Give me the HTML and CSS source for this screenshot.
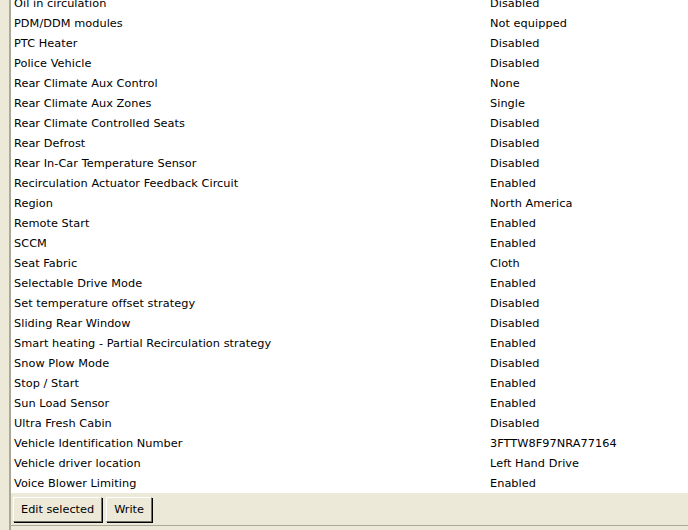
FILE: index.html
```html
<!DOCTYPE html>
<html>
<head><meta charset="utf-8"><link rel="stylesheet" href="styles.css"></head>
<body>
<div class="app">
  <div class="side"></div>
  <div class="main">
    <div class="list">
      <div class="rows">
        <div class="row"><span class="name">Oil in circulation</span><span class="val">Disabled</span></div>
        <div class="row"><span class="name">PDM/DDM modules</span><span class="val">Not equipped</span></div>
        <div class="row"><span class="name">PTC Heater</span><span class="val">Disabled</span></div>
        <div class="row"><span class="name">Police Vehicle</span><span class="val">Disabled</span></div>
        <div class="row"><span class="name">Rear Climate Aux Control</span><span class="val">None</span></div>
        <div class="row"><span class="name">Rear Climate Aux Zones</span><span class="val">Single</span></div>
        <div class="row"><span class="name">Rear Climate Controlled Seats</span><span class="val">Disabled</span></div>
        <div class="row"><span class="name">Rear Defrost</span><span class="val">Disabled</span></div>
        <div class="row"><span class="name">Rear In-Car Temperature Sensor</span><span class="val">Disabled</span></div>
        <div class="row"><span class="name">Recirculation Actuator Feedback Circuit</span><span class="val">Enabled</span></div>
        <div class="row"><span class="name">Region</span><span class="val">North America</span></div>
        <div class="row"><span class="name">Remote Start</span><span class="val">Enabled</span></div>
        <div class="row"><span class="name">SCCM</span><span class="val">Enabled</span></div>
        <div class="row"><span class="name">Seat Fabric</span><span class="val">Cloth</span></div>
        <div class="row"><span class="name">Selectable Drive Mode</span><span class="val">Enabled</span></div>
        <div class="row"><span class="name">Set temperature offset strategy</span><span class="val">Disabled</span></div>
        <div class="row"><span class="name">Sliding Rear Window</span><span class="val">Disabled</span></div>
        <div class="row"><span class="name">Smart heating - Partial Recirculation strategy</span><span class="val">Enabled</span></div>
        <div class="row"><span class="name">Snow Plow Mode</span><span class="val">Disabled</span></div>
        <div class="row"><span class="name">Stop / Start</span><span class="val">Enabled</span></div>
        <div class="row"><span class="name">Sun Load Sensor</span><span class="val">Enabled</span></div>
        <div class="row"><span class="name">Ultra Fresh Cabin</span><span class="val">Disabled</span></div>
        <div class="row"><span class="name">Vehicle Identification Number</span><span class="val">3FTTW8F97NRA77164</span></div>
        <div class="row"><span class="name">Vehicle driver location</span><span class="val">Left Hand Drive</span></div>
        <div class="row"><span class="name">Voice Blower Limiting</span><span class="val">Enabled</span></div>
      </div>
    </div>
    <div class="toolbar">
      <button class="btn">Edit selected</button>
      <button class="btn">Write</button>
    </div>
    <div class="status"></div>
  </div>
</div>
</body>
</html>
```
FILE: styles.css
```css
html, body {
  margin: 0;
  padding: 0;
  width: 688px;
  height: 530px;
  overflow: hidden;
  background: #ECE9D8;
  font-family: "DejaVu Sans", "Liberation Sans", sans-serif;
  font-size: 11.3px;
  letter-spacing: 0.05px;
  color: #000;
}
.app {
  display: flex;
  height: 530px;
}
.side {
  width: 9px;
  flex: none;
  background: #ECE9D8;
  border-right: 2px solid #ACA899;
}
.main {
  flex: 1;
  display: flex;
  flex-direction: column;
}
.list {
  height: 493px;
  background: #fff;
  overflow: hidden;
  flex: none;
}
.rows {
  margin-top: -7px;
}
.row {
  display: flex;
  height: 20px;
  align-items: center;
  padding-top: 1px;
  box-sizing: border-box;
}
.name {
  width: 476px;
  padding-left: 3px;
  white-space: nowrap;
}
.val {
  white-space: nowrap;
}
.toolbar {
  height: 32px;
  display: flex;
  align-items: center;
  gap: 4px;
  padding-left: 2px;
  flex: none;
}
.btn {
  font-family: inherit;
  font-size: 11.3px;
  height: 25px;
  padding: 0 7px;
  background: #ECE9D8;
  border: 1px solid;
  border-color: #fff #716F64 #716F64 #fff;
  box-shadow: 1px 1px 0 #000;
  color: #000;
}
.status {
  border-top: 1px solid #ACA899;
  flex: 1;
}
```
